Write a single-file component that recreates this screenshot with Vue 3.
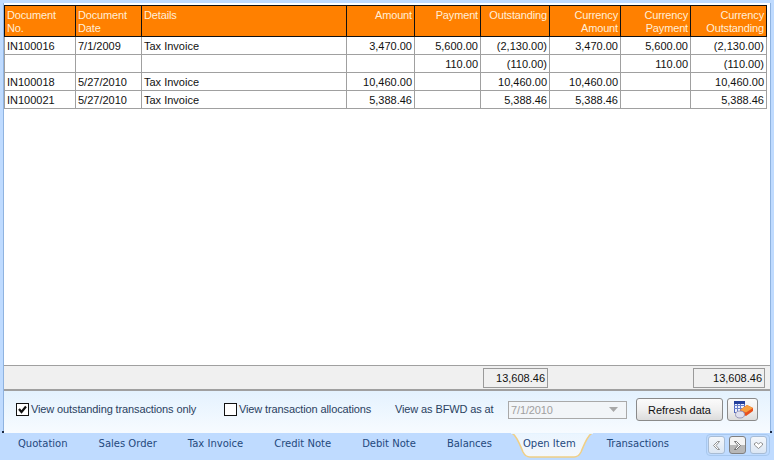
<script setup>
const aligns = ['l','l','l','r','r','r','r','r','r']
const head = [['Document','No.'],['Document','Date'],['Details'],['Amount'],['Payment'],['Outstanding'],['Currency','Amount'],['Currency','Payment'],['Currency','Outstanding']]
const rows = [
  ['IN100016','7/1/2009','Tax Invoice','3,470.00','5,600.00','(2,130.00)','3,470.00','5,600.00','(2,130.00)'],
  ['','','','','110.00','(110.00)','','110.00','(110.00)'],
  ['IN100018','5/27/2010','Tax Invoice','10,460.00','','10,460.00','10,460.00','','10,460.00'],
  ['IN100021','5/27/2010','Tax Invoice','5,388.46','','5,388.46','5,388.46','','5,388.46'],
]
const tabs = ['Quotation','Sales Order','Tax Invoice','Credit Note','Debit Note','Balances','Open Item','Transactions']
</script>

<template>
  <div class="app">
    <div class="frame">
      <div class="sheet">
        <div class="row head">
          <div v-for="(h,i) in head" :key="i" class="hc" :class="aligns[i]">
            <span v-for="t in h" :key="t">{{ t }}</span>
          </div>
        </div>
        <div v-for="(r,ri) in rows" :key="ri" class="row body">
          <div v-for="(c,i) in r" :key="i" class="bc" :class="aligns[i]">{{ c }}</div>
        </div>
        <div class="spacer"></div>
        <div class="totals">
          <div class="tot t1">13,608.46</div>
          <div class="tot t2">13,608.46</div>
        </div>
      </div>
      <div class="options">
        <label class="check c1"><span class="box"><svg width="11" height="11" viewBox="0 0 11 11"><path d="M2 5 L4.500 8 L9 2.500" fill="none" stroke="#111" stroke-width="2.200"/></svg></span>View outstanding transactions only</label>
        <label class="check c2"><span class="box"></span>View transaction allocations</label>
        <span class="bfwd">View as BFWD as at</span>
        <div class="combo"><span>7/1/2010</span><svg width="9" height="5" viewBox="0 0 9 5"><path d="M0 0 H9 L4.500 5 Z" fill="#a8a8a8"/></svg></div>
        <button class="btn refresh">Refresh data</button>
        <button class="btn icon">
          <svg width="22" height="20" viewBox="0 0 22 20">
            <rect x="2.500" y="1.500" width="10" height="11" fill="#eef2fb" stroke="#5068c0"/>
            <path d="M5.500 1V12M8.500 1V12M2 5.500H13M2 8.500H13" stroke="#6a80cc" fill="none"/>
            <path d="M2 1h11v3H2z" fill="#24409c"/>
            <path d="M8 10 L15 5 L21 8 L21 11 L14 16 L8 13 Z" fill="#e8501c"/>
            <path d="M8 10 L15 5 L21 8 L14 12.500 Z" fill="#f8a040"/>
            <ellipse cx="8" cy="14.500" rx="4.500" ry="3.500" fill="#dfe0ee" stroke="#9a9ab8"/>
          </svg>
        </button>
      </div>
      <i class="dot left"></i>
      <i class="dot right"></i>
    </div>
    <div class="tabbar">
      <div class="tabs">
        <div v-for="t in tabs" :key="t" class="tab" :class="{active: t==='Open Item'}">
          <svg v-if="t==='Open Item'" class="tabshape" width="82" height="25" viewBox="0 0 82 25">
            <defs>
              <linearGradient id="tabfill" x1="0" y1="0" x2="0" y2="1">
                <stop offset="0" stop-color="#eaf5ff"/>
                <stop offset="1" stop-color="#f4f7fb"/>
              </linearGradient>
            </defs>
            <path d="M1 0 C6 3 9 12 12 19 C13.500 22 15 24 19 24 H63 C67 24 68.500 22 70 19 C73 12 76 3 81 0 Z" fill="url(#tabfill)" stroke="#f0cf85" stroke-width="1.500"/>
            <path d="M0 0H82" stroke="#e6f3fe" stroke-width="2"/>
          </svg>
          <span>{{ t }}</span>
        </div>
      </div>
      <div class="nav">
        <span class="nb"><svg width="11" height="11" viewBox="0 0 11 11"><path d="M6.500 1.500 L2.500 5.500 L6.500 9.500 L8.500 9.500 L5 5.500 L8.500 1.500 Z" fill="#fff" stroke="#777" stroke-width=".8"/></svg></span>
        <span class="nb on"><svg width="11" height="11" viewBox="0 0 11 11"><path d="M4.500 1.500 L8.500 5.500 L4.500 9.500 L2.500 9.500 L6 5.500 L2.500 1.500 Z" fill="#fff" stroke="#555" stroke-width=".8"/></svg></span>
        <span class="nb"><svg width="11" height="11" viewBox="0 0 11 11"><path d="M1.500 3.500 L3.500 2.500 L5.500 4 L7.500 2.500 L9.500 3.500 L9.500 5 L5.500 8.500 L1.500 5 Z" fill="#fff" stroke="#777" stroke-width=".8"/></svg></span>
      </div>
    </div>
  </div>
</template>

<style scoped>
.app {
  width: 774px;
  height: 460px;
  background: #bfdbff;
  display: flex;
  flex-direction: column;
  overflow: hidden;
  font-family: "Liberation Sans", sans-serif;
  font-size: 11px;
  color: #111;
}
.frame {
  position: relative;
  height: 433px;
  padding-top: 3px;
  box-sizing: border-box;
  border-left: 3px solid #bfdbff;
  border-right: 3px solid #bfdbff;
  background: #fff;
  display: flex;
  flex-direction: column;
  box-shadow: inset 0 3px 0 #bfdbff, inset 1px 0 0 #8fb3e0, inset -1px 0 0 #8fb3e0;
}
.dot {
  position: absolute;
  bottom: 0;
  width: 2px;
  height: 2px;
  background: #1c2a44;
}
.dot.left { left: -1px; }
.dot.right { right: -1px; }
.sheet {
  flex: 1;
  display: flex;
  flex-direction: column;
  margin-left: 1px;
  margin-top: 2px;
}
.row {
  display: grid;
  grid-template-columns: 71px 66px 205px 68px 66px 69px 71px 70px 76px;
  width: 763px;
  box-sizing: border-box;
}
.head {
  height: 32px;
  background: #ff8000;
  color: #ffeed8;
  border-top: 1px solid #111;
  border-bottom: 1px solid #111;
  border-left: 1px solid #111;
}
.hc {
  border-right: 1px solid #111;
  display: flex;
  flex-direction: column;
  line-height: 13px;
  padding: 3px 2px 0 2px;
  min-width: 0;
  letter-spacing: -0.15px;
}
.hc.r { align-items: flex-end; }
.body {
  height: 18px;
  border-bottom: 1px solid #a0a0a0;
  border-left: 1px solid #a0a0a0;
}
.bc {
  border-right: 1px solid #a0a0a0;
  line-height: 18px;
  padding: 0 2px;
  white-space: nowrap;
}
.bc.r { text-align: right; }
.spacer { flex: 1; }
.totals {
  height: 26px;
  box-sizing: border-box;
  margin-right: 1px;
  background: #f0f0f0;
  border-top: 1px solid #a0a0a0;
  border-bottom: 2px solid #a0a0a0;
  display: flex;
  align-items: center;
  padding-left: 479px;
}
.tot {
  box-sizing: border-box;
  height: 20px;
  border: 1px solid #9a9a9a;
  line-height: 18px;
  text-align: right;
  padding-right: 2px;
}
.t1 { width: 65px; }
.t2 { width: 72px; margin-left: 145px; }
.options {
  height: 42px;
  flex: none;
  margin: 0 1px;
  background: linear-gradient(#e4f2fe, #f7fbff);
  display: flex;
  align-items: center;
  padding-bottom: 5px;
  box-sizing: border-box;
  color: #2a3f5f;
  letter-spacing: -0.12px;
}
.check {
  display: flex;
  align-items: center;
  gap: 2px;
  white-space: nowrap;
}
.c1 { margin-left: 12px; width: 208px; flex: none; padding-bottom: 1px; box-sizing: border-box; }
.c2 { width: 171px; flex: none; padding-bottom: 1px; box-sizing: border-box; }
.box {
  box-sizing: border-box;
  width: 13px;
  height: 13px;
  border: 1px solid #111;
  background: #fff;
  display: flex;
  align-items: center;
  justify-content: center;
  flex: none;
}
.bfwd { width: 113px; white-space: nowrap; flex: none; padding-bottom: 1px; }
.combo {
  box-sizing: border-box;
  width: 119px;
  height: 18px;
  flex: none;
  border: 1px solid #a9a9a9;
  background: #f2f5f8;
  color: #a0a0a0;
  display: flex;
  align-items: center;
  justify-content: space-between;
  padding: 0 8px 0 2px;
}
.btn {
  box-sizing: border-box;
  height: 23px;
  flex: none;
  border: 1px solid #8a8a8a;
  border-radius: 3px;
  background: linear-gradient(#fbfbfb 0%, #f0f0f0 50%, #dcdcdc 100%);
  font: inherit;
  letter-spacing: 0;
  color: #111;
  padding: 0;
}
.refresh { width: 87px; margin-left: 9px; }
.icon { width: 31px; margin-left: 4px; display: flex; align-items: center; justify-content: center; }
.tabbar {
  flex: 1;
  display: flex;
  color: #1f497d;
  position: relative;
}
.tabs {
  display: flex;
  gap: 31px;
  padding-left: 18px;
  font-family: "DejaVu Sans", sans-serif;
  font-size: 10px;
}
.tab {
  position: relative;
  height: 25px;
  line-height: 22px;
  white-space: nowrap;
}
.tab span { position: relative; }
.tabshape { position: absolute; left: -12px; top: 0; }
.nav {
  position: absolute;
  right: 4px;
  top: 1px;
  height: 22px;
  box-sizing: border-box;
  width: 64px;
  display: flex;
  gap: 4px;
  align-items: flex-start;
  padding: 1px 1px 0;
  border: 1px solid #a8c8ee;
  border-radius: 4px;
}
.nb {
  box-sizing: border-box;
  width: 17px;
  height: 18px;
  flex: none;
  border: 1px solid #a8bcd4;
  border-radius: 3px;
  background: linear-gradient(#f4f7fb, #dbe6f3);
  display: flex;
  align-items: center;
  justify-content: center;
}
.nb.on { background: linear-gradient(#f4f4f4 50%, #b8b8b8 50%); border-color: #808080; }
</style>
